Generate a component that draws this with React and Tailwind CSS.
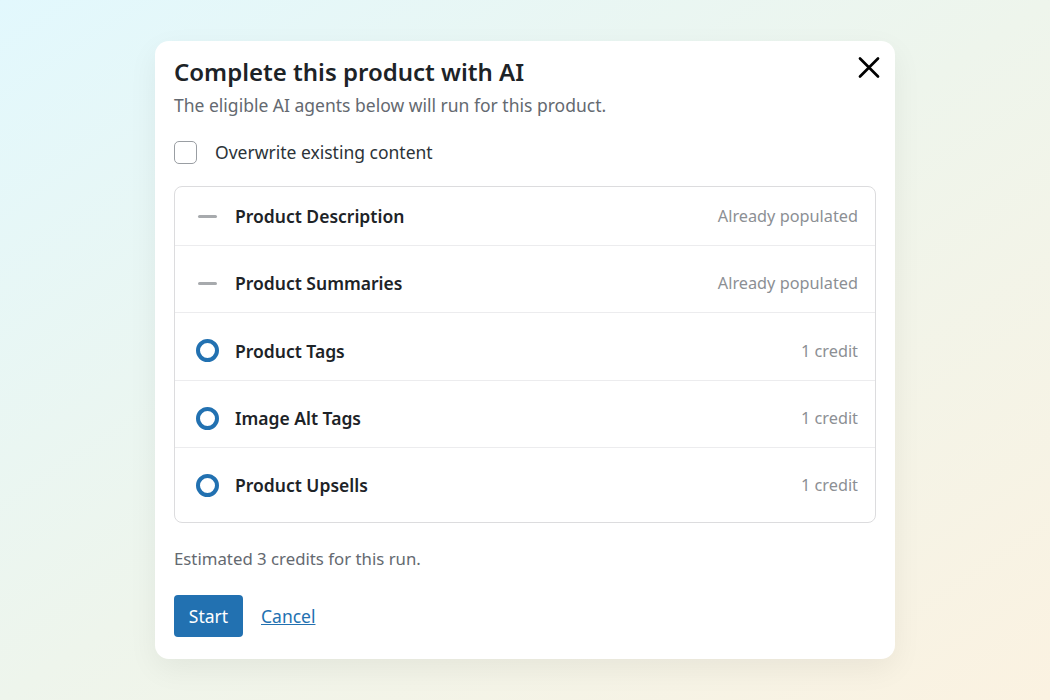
import React from 'react';

const agents = [
  { name: 'Product Description', status: 'Already populated', done: true, h: 'h-[58px]' },
  { name: 'Product Summaries', status: 'Already populated', done: true, h: 'h-[67px] pt-[8px]' },
  { name: 'Product Tags', status: '1 credit', done: false, h: 'h-[68px] pt-[8px]' },
  { name: 'Image Alt Tags', status: '1 credit', done: false, h: 'h-[67px] pt-[8px]' },
  { name: 'Product Upsells', status: '1 credit', done: false, h: 'h-[75px] pt-[8px] pb-[8px]' },
];

const App = () => {
  return (
    <div
      className="w-[1050px] h-[700px] flex items-start justify-center pt-[41px] bg-gradient-to-br from-[#e2f8fd] via-[#eef5ec] to-[#fbf2e1]"
      style={{ fontFamily: '"Noto Sans", "Open Sans", sans-serif' }}
    >
      <div className="relative w-[740px] h-[618px] bg-white rounded-[14px] shadow-[0_10px_30px_rgba(0,0,0,0.06)] px-[19px] pt-[15px]">
        <button className="absolute right-[11px] top-[12px] w-[30px] h-[30px] flex items-center justify-center text-black">
          <svg width="24" height="24" viewBox="0 0 24 24" fill="none" stroke="currentColor" strokeWidth="2.7" strokeLinecap="round">
            <path d="M3 2.5 L21 20.5 M21 2.5 L3 20.5" />
          </svg>
        </button>

        <h1 className="text-[24px] leading-[32px] font-semibold text-[#1d2327]">
          Complete this product with AI
        </h1>
        <p className="text-[17.5px] leading-[24px] text-[#646970] mt-[5px]">
          The eligible AI agents below will run for this product.
        </p>

        <label className="flex items-center gap-[18px] mt-[22px]">
          <span className="w-[23px] h-[23px] rounded-[5px] border-[1.5px] border-[#9a9ea3] bg-white"></span>
          <span className="text-[17.5px] text-[#2c3338]">Overwrite existing content</span>
        </label>

        <div className="mt-[21px] border border-[#dcdcde] rounded-[8px] overflow-hidden">
          {agents.map((a, i) => (
            <div
              key={a.name}
              className={`flex items-center ${a.h} pl-[20px] pr-[17px] ${i > 0 ? 'border-t border-[#ececee]' : ''}`}
            >
              <div className="w-[24px] flex items-center justify-center">
                {a.done ? (
                  <span className="w-[19px] h-[3px] rounded bg-[#a7aaad]"></span>
                ) : (
                  <span className="w-[23px] h-[23px] rounded-full border-[4px] border-[#2271b1]"></span>
                )}
              </div>
              <span className="ml-[16px] text-[17.5px] font-semibold text-[#1d2327]">{a.name}</span>
              <span className="ml-auto text-[16.3px] text-[#8c8f94]">{a.status}</span>
            </div>
          ))}
        </div>

        <p className="mt-[23px] text-[16.8px] text-[#646970]">Estimated 3 credits for this run.</p>

        <div className="flex items-center gap-[18px] mt-[24px]">
          <button className="w-[69px] h-[42px] rounded-[4px] bg-[#2271b1] text-white text-[17.5px]">Start</button>
          <a href="#" className="text-[17.5px] text-[#2271b1] underline">Cancel</a>
        </div>
      </div>
    </div>
  );
};

export default App;
